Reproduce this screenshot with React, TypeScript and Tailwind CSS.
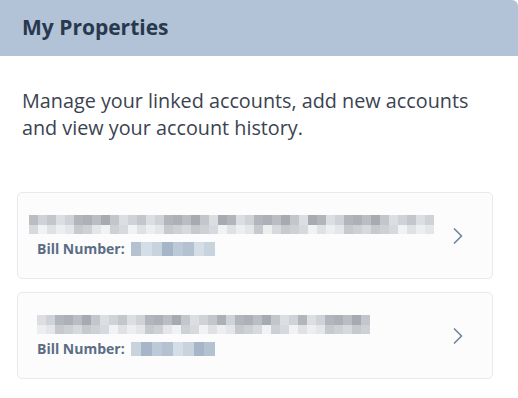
import { ChevronRight } from "lucide-react";

const darkGrays = ["#c3c6cb", "#b2b5bb", "#a7abb1", "#cfd2d6", "#babdc2", "#dcdee1", "#adb1b7"];
const lightGrays = ["#e4e6e9", "#d6d9dd", "#eceef0", "#cdd0d5", "#dfe1e4", "#c6c9ce", "#f1f2f4"];
const blues = ["#c9d3de", "#b4c1d0", "#a6b5c7", "#d5dde6", "#bccad8"];

// cheap hash so neighbouring cells don't step through the palette in order
const pick = (list: string[], n: number) => list[((n * 2654435761) >>> 0) % 97 % list.length];

const PixelRow = ({
  cols,
  seed,
  palette,
  cellW,
  cellH,
}: {
  cols: number;
  seed: number;
  palette: string[];
  cellW: number;
  cellH: number;
}) => (
  <div className="flex">
    {Array.from({ length: cols }).map((_, c) => (
      <div
        key={c}
        style={{
          width: cellW,
          height: cellH,
          background: pick(palette, seed * 31 + c),
        }}
      />
    ))}
  </div>
);

const PropertyCard = ({ cols, seed, shift }: { cols: number; seed: number; shift?: boolean }) => (
  <div className="flex items-center h-[87px] rounded-[5px] border border-[#e7e9ec] bg-[#fcfcfd] pl-[19px] pr-[20px]">
    <div className="flex flex-col flex-1">
      <div className={shift ? "-ml-[8px]" : ""}>
        <PixelRow cols={cols} seed={seed} palette={darkGrays} cellW={9} cellH={10} />
        <PixelRow cols={cols} seed={seed + 5} palette={lightGrays} cellW={9} cellH={9} />
      </div>
      <div className="mt-[8px] flex items-center text-[14px] font-bold text-[#5a6d84] leading-none">
        <span>Bill Number:</span>
        <div className="ml-[6px]">
          <PixelRow cols={8} seed={seed + 2} palette={blues} cellW={10.5} cellH={14} />
        </div>
      </div>
    </div>
    <ChevronRight className="w-[28px] h-[28px] text-[#7086a2]" strokeWidth={1.5} />
  </div>
);

export default function App() {
  return (
    <div className="w-[518px] h-[398px] bg-white font-['Open_Sans',sans-serif] overflow-hidden">
      <div className="h-[56px] flex items-center pl-[22px] bg-[#b2c3d7] rounded-tr-[6px]">
        <h1 className="text-[21px] font-bold text-[#28384d]">My Properties</h1>
      </div>
      <p className="mt-[31px] px-[22px] pr-[30px] text-[19.8px] leading-[27px] text-[#3b4350]">
        Manage your linked accounts, add new accounts and view your account history.
      </p>
      <div className="mt-[51px] px-[17px] pr-[25px] flex flex-col gap-[13px]">
        <PropertyCard cols={45} seed={1} shift />
        <PropertyCard cols={37} seed={4} />
      </div>
    </div>
  );
}
